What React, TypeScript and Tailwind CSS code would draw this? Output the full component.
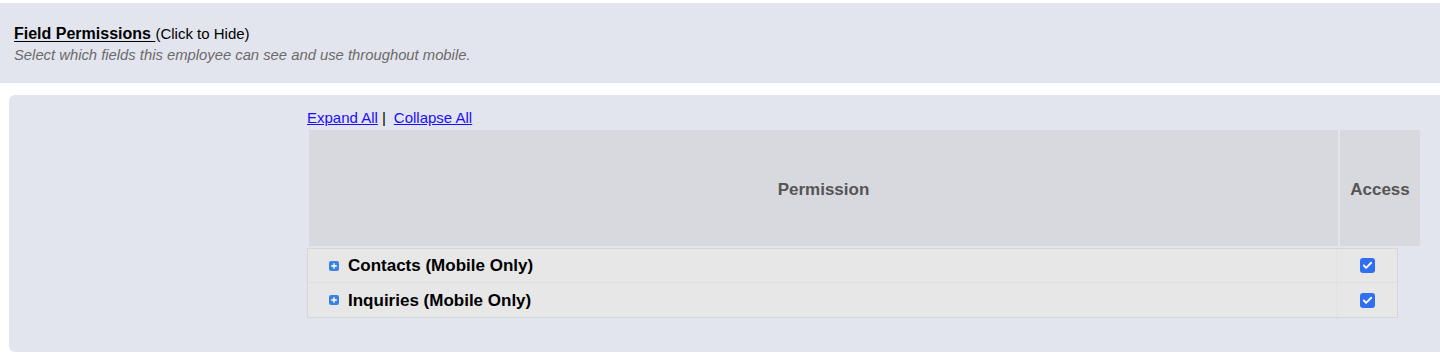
import { Check, Plus } from 'lucide-react';

const rows = ['Contacts (Mobile Only)', 'Inquiries (Mobile Only)'];

function PermissionRow({ label, last }: { label: string; last: boolean }) {
  return (
    <div className={`flex h-[34px] items-center ${last ? '' : 'border-b border-[#dfdfe2]'}`}>
      <div className="flex h-full flex-1 items-center border-r border-[#e2e2e5] pl-[21px]">
        <span className="flex h-[10px] w-[10px] items-center justify-center rounded-[2px] bg-[#3d82e0]">
          <Plus className="h-[8px] w-[8px] text-white" strokeWidth={4} />
        </span>
        <span className="ml-[9px] pt-[1px] text-[17px] font-bold text-black">{label}</span>
      </div>
      <div className="flex h-full w-[60px] items-center justify-center">
        <span className="flex h-[15px] w-[15px] items-center justify-center rounded-[3px] bg-[#2f6ff0]">
          <Check className="h-[11px] w-[11px] text-white" strokeWidth={4} />
        </span>
      </div>
    </div>
  );
}

export default function App() {
  return (
    <div className="min-h-screen bg-white pt-[3px] font-['Liberation_Sans',Arial,sans-serif]">
      <div className="h-[80px] bg-[#e3e5ee] pl-[14px] pt-[22px]">
        <p className="text-[15px] leading-[18px] text-black">
          <span className="text-[16px] font-bold underline underline-offset-2">Field Permissions </span>
          <span>(Click to Hide)</span>
        </p>
        <p className="mt-[3px] text-[14.8px] italic leading-[18px] text-[#6b6b6b]">
          Select which fields this employee can see and use throughout mobile.
        </p>
      </div>
      <div className="ml-[9px] mt-[12px] h-[257px] rounded-l-[6px] bg-[#e3e5ee] pl-[298px] pt-[14px]">
        <div className="text-[15px] leading-[18px] text-black">
          <a href="#" className="text-[#1a0dff] underline">Expand All</a>
          <span className="ml-[4px]">|</span>
          <a href="#" className="ml-[8px] text-[#1a0dff] underline">Collapse All</a>
        </div>
        <div className="flex w-[1115px] gap-[2px] p-[2px] pt-[3px]">
          <div className="flex h-[116px] flex-1 items-center justify-center bg-[#d8d9de] pt-[3px] text-[17px] font-bold text-[#555555]">
            Permission
          </div>
          <div className="flex h-[116px] w-[80px] items-center justify-center bg-[#d8d9de] pt-[3px] text-[17px] font-bold text-[#555555]">
            Access
          </div>
        </div>
        <div className="w-[1091px] border border-[#d6d7dc] bg-[#e7e7e8]">
          {rows.map((label, i) => (
            <PermissionRow key={label} label={label} last={i === rows.length - 1} />
          ))}
        </div>
      </div>
    </div>
  );
}
